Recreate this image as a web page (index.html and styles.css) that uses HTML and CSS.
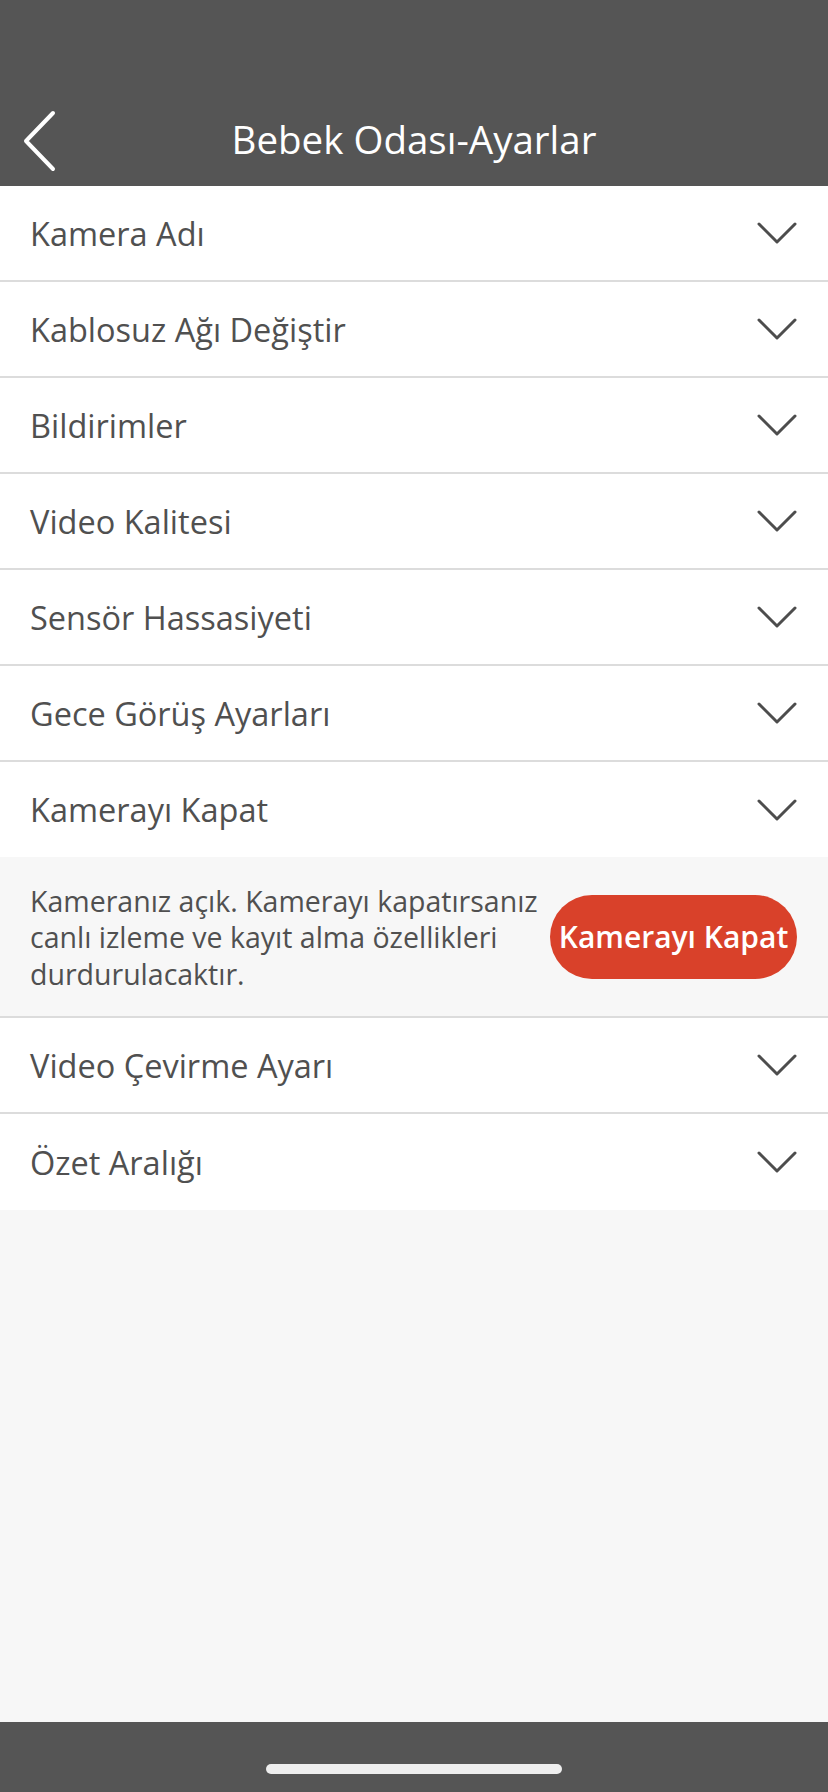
FILE: index.html
```html
<!DOCTYPE html>
<html>
<head>
  <meta name="viewport" content="width=device-width, initial-scale=1.0">
  <link rel="stylesheet" href="styles.css">
</head>
<body>
  <div class="pantalla">
    <!-- CABECERA -->
    <div class="cabecera">
      <svg class="atras" width="36" height="62" viewBox="0 0 36 62">
        <polyline points="32,3 5,31 32,59" fill="none" stroke="#fff" stroke-width="4" stroke-linecap="round" stroke-linejoin="round"/>
      </svg>
      <h1>Bebek Odası-Ayarlar</h1>
    </div>

    <!-- LISTA DE AJUSTES -->
    <div class="lista">
      <div class="fila"><span>Kamera Adı</span><svg class="flecha" viewBox="0 0 40 22"><polyline points="2,2 20,20 38,2"/></svg></div>
      <div class="fila"><span>Kablosuz Ağı Değiştir</span><svg class="flecha" viewBox="0 0 40 22"><polyline points="2,2 20,20 38,2"/></svg></div>
      <div class="fila"><span>Bildirimler</span><svg class="flecha" viewBox="0 0 40 22"><polyline points="2,2 20,20 38,2"/></svg></div>
      <div class="fila"><span>Video Kalitesi</span><svg class="flecha" viewBox="0 0 40 22"><polyline points="2,2 20,20 38,2"/></svg></div>
      <div class="fila"><span>Sensör Hassasiyeti</span><svg class="flecha" viewBox="0 0 40 22"><polyline points="2,2 20,20 38,2"/></svg></div>
      <div class="fila"><span>Gece Görüş Ayarları</span><svg class="flecha" viewBox="0 0 40 22"><polyline points="2,2 20,20 38,2"/></svg></div>
      <div class="fila abierta"><span>Kamerayı Kapat</span><svg class="flecha" viewBox="0 0 40 22"><polyline points="2,2 20,20 38,2"/></svg></div>
      <div class="panel">
        <p>Kameranız açık. Kamerayı kapatırsanız canlı izleme ve kayıt alma özellikleri durdurulacaktır.</p>
        <button class="btn-kapat">Kamerayı Kapat</button>
      </div>
      <div class="fila"><span>Video Çevirme Ayarı</span><svg class="flecha" viewBox="0 0 40 22"><polyline points="2,2 20,20 38,2"/></svg></div>
      <div class="fila ultima"><span>Özet Aralığı</span><svg class="flecha" viewBox="0 0 40 22"><polyline points="2,2 20,20 38,2"/></svg></div>
    </div>

    <div class="relleno"></div>

    <!-- BARRA INFERIOR -->
    <div class="barra-inferior">
      <div class="indicador"></div>
    </div>
  </div>
</body>
</html>
```

FILE: styles.css
```css
/* ESTILOS GENERALES */
body {
  margin: 0;
  background: #f7f7f7;
  font-family: "Open Sans", "Noto Sans", sans-serif;
}

.pantalla {
  display: flex;
  flex-direction: column;
  height: 1792px;
}

/* CABECERA */
.cabecera {
  height: 186px;
  background: #555555;
  display: flex;
  align-items: flex-end;
  justify-content: center;
  position: relative;
  box-sizing: border-box;
  padding-bottom: 22px;
}

.cabecera h1 {
  margin: 0;
  color: #ffffff;
  font-size: 38.5px;
  font-weight: 400;
  line-height: 50px;
}

.atras {
  position: absolute;
  left: 21px;
  top: 110px;
}

/* LISTA */
.lista {
  background: #ffffff;
}

.fila {
  height: 94px;
  display: flex;
  align-items: center;
  justify-content: space-between;
  padding: 0 31px 0 30px;
  border-bottom: 2px solid #dcdcdc;
  color: #505050;
  font-size: 32.5px;
}

.fila.abierta {
  border-bottom: none;
  height: 95px;
}

.fila.ultima {
  border-bottom: none;
  height: 96px;
}

.flecha {
  width: 40px;
  height: 22px;
}

.flecha polyline {
  fill: none;
  stroke: #4d4d4d;
  stroke-width: 3;
  stroke-linecap: round;
  stroke-linejoin: round;
}

/* PANEL DESPLEGADO */
.panel {
  background: #f7f7f7;
  height: 159px;
  border-bottom: 2px solid #dcdcdc;
  display: flex;
  align-items: center;
  padding: 0 31px 0 30px;
}

.panel p {
  margin: 0;
  flex: 1;
  color: #505050;
  font-size: 28.5px;
  line-height: 36.5px;
  padding-top: 2px;
}

.btn-kapat {
  flex: none;
  width: 247px;
  height: 84px;
  border: none;
  border-radius: 42px;
  background: #d9412a;
  color: #ffffff;
  font-family: "Open Sans", "Noto Sans", sans-serif;
  font-size: 30px;
  font-weight: 600;
  padding: 0;
  white-space: nowrap;
}

.relleno {
  flex: 1;
  background: #f7f7f7;
}

/* BARRA INFERIOR */
.barra-inferior {
  height: 70px;
  background: #555555;
  display: flex;
  justify-content: center;
}

.indicador {
  width: 296px;
  height: 10px;
  margin-top: 42px;
  border-radius: 5px;
  background: #eeeeee;
}
```
